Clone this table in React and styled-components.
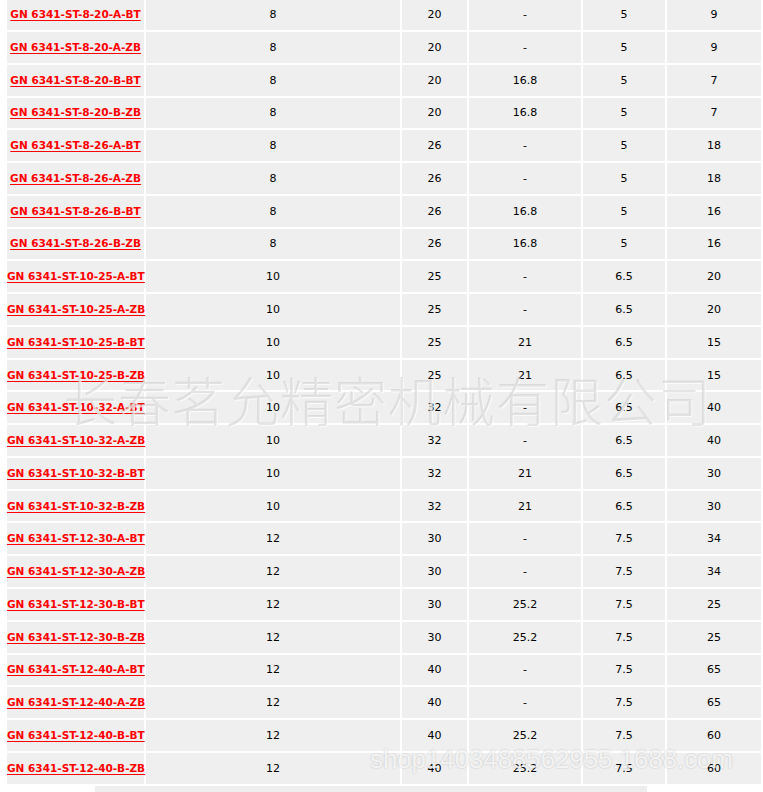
import React from "react";
import styled, { createGlobalStyle } from "styled-components";

const GlobalStyle = createGlobalStyle`
    html, body {
        margin: 0;
        padding: 0;
        background: #fff;
        overflow: hidden;
    }
    body {
        font-family: "DejaVu Sans", Verdana, sans-serif;
    }
`;

const Page = styled.div`
    position: relative;
    width: 763px;
    height: 792px;
    overflow: hidden;
`;

const SpecTable = styled.table`
    margin: -2.8px 0 0 5px;
    border-collapse: separate;
    border-spacing: 2px;
    table-layout: fixed;
    width: 758px;
    font-size: 11px;
    color: #000;
`;

const Cell = styled.td`
    background: #efefef;
    height: 30.78px;
    padding: 0;
    text-align: center;
    vertical-align: middle;
    white-space: nowrap;
    overflow: visible;
`;

const PartLink = styled.a`
    color: #ff0000;
    font-weight: bold;
    font-size: 10.5px;
    text-decoration: underline;
    text-underline-offset: 2px;
`;

const BottomBar = styled.div`
    margin-left: 95px;
    width: 552px;
    height: 20px;
    background: #eeeeee;
`;

const CompanyMark = styled.div`
    position: absolute;
    left: 64px;
    top: 373px;
    font-family: "Noto Sans CJK SC", sans-serif;
    font-weight: 300;
    font-size: 53px;
    letter-spacing: 1px;
    line-height: 1;
    color: rgba(190, 190, 190, 0.4);
    text-shadow: 1px 1px 0 rgba(255, 255, 255, 0.7);
    pointer-events: none;
    white-space: nowrap;
`;

const ShopMark = styled.div`
    position: absolute;
    left: 370px;
    top: 747px;
    font-family: "Liberation Sans", Arial, sans-serif;
    font-size: 25.8px;
    line-height: 1;
    color: rgba(255, 255, 255, 0.8);
    text-shadow: 0 0 2px rgba(0, 0, 0, 0.22);
    pointer-events: none;
    white-space: nowrap;
`;

const rows = [
    ["8-20-A-BT", 8, 20, "-", 5, 9],
    ["8-20-A-ZB", 8, 20, "-", 5, 9],
    ["8-20-B-BT", 8, 20, "16.8", 5, 7],
    ["8-20-B-ZB", 8, 20, "16.8", 5, 7],
    ["8-26-A-BT", 8, 26, "-", 5, 18],
    ["8-26-A-ZB", 8, 26, "-", 5, 18],
    ["8-26-B-BT", 8, 26, "16.8", 5, 16],
    ["8-26-B-ZB", 8, 26, "16.8", 5, 16],
    ["10-25-A-BT", 10, 25, "-", "6.5", 20],
    ["10-25-A-ZB", 10, 25, "-", "6.5", 20],
    ["10-25-B-BT", 10, 25, "21", "6.5", 15],
    ["10-25-B-ZB", 10, 25, "21", "6.5", 15],
    ["10-32-A-BT", 10, 32, "-", "6.5", 40],
    ["10-32-A-ZB", 10, 32, "-", "6.5", 40],
    ["10-32-B-BT", 10, 32, "21", "6.5", 30],
    ["10-32-B-ZB", 10, 32, "21", "6.5", 30],
    ["12-30-A-BT", 12, 30, "-", "7.5", 34],
    ["12-30-A-ZB", 12, 30, "-", "7.5", 34],
    ["12-30-B-BT", 12, 30, "25.2", "7.5", 25],
    ["12-30-B-ZB", 12, 30, "25.2", "7.5", 25],
    ["12-40-A-BT", 12, 40, "-", "7.5", 65],
    ["12-40-A-ZB", 12, 40, "-", "7.5", 65],
    ["12-40-B-BT", 12, 40, "25.2", "7.5", 60],
    ["12-40-B-ZB", 12, 40, "25.2", "7.5", 60],
];

const colWidths = [137, 254, 65, 112, 82, 94];

export default function App() {
    return <>
        <GlobalStyle />
        <Page>
            <SpecTable>
                <colgroup>
                    {colWidths.map((w, i) => <col key={i} style={{ width: w }} />)}
                </colgroup>
                <tbody>
                    {rows.map(([code, ...vals]) => {
                        return <tr key={code}>
                            <Cell>
                                <PartLink href="#">{"GN 6341-ST-" + code}</PartLink>
                            </Cell>
                            {vals.map((v, i) => <Cell key={i}>{v}</Cell>)}
                        </tr>
                    })}
                </tbody>
            </SpecTable>
            <BottomBar />
            <CompanyMark>长春茗允精密机械有限公司</CompanyMark>
            <ShopMark>shop1403488562955.1688.com</ShopMark>
        </Page>
    </>
}
